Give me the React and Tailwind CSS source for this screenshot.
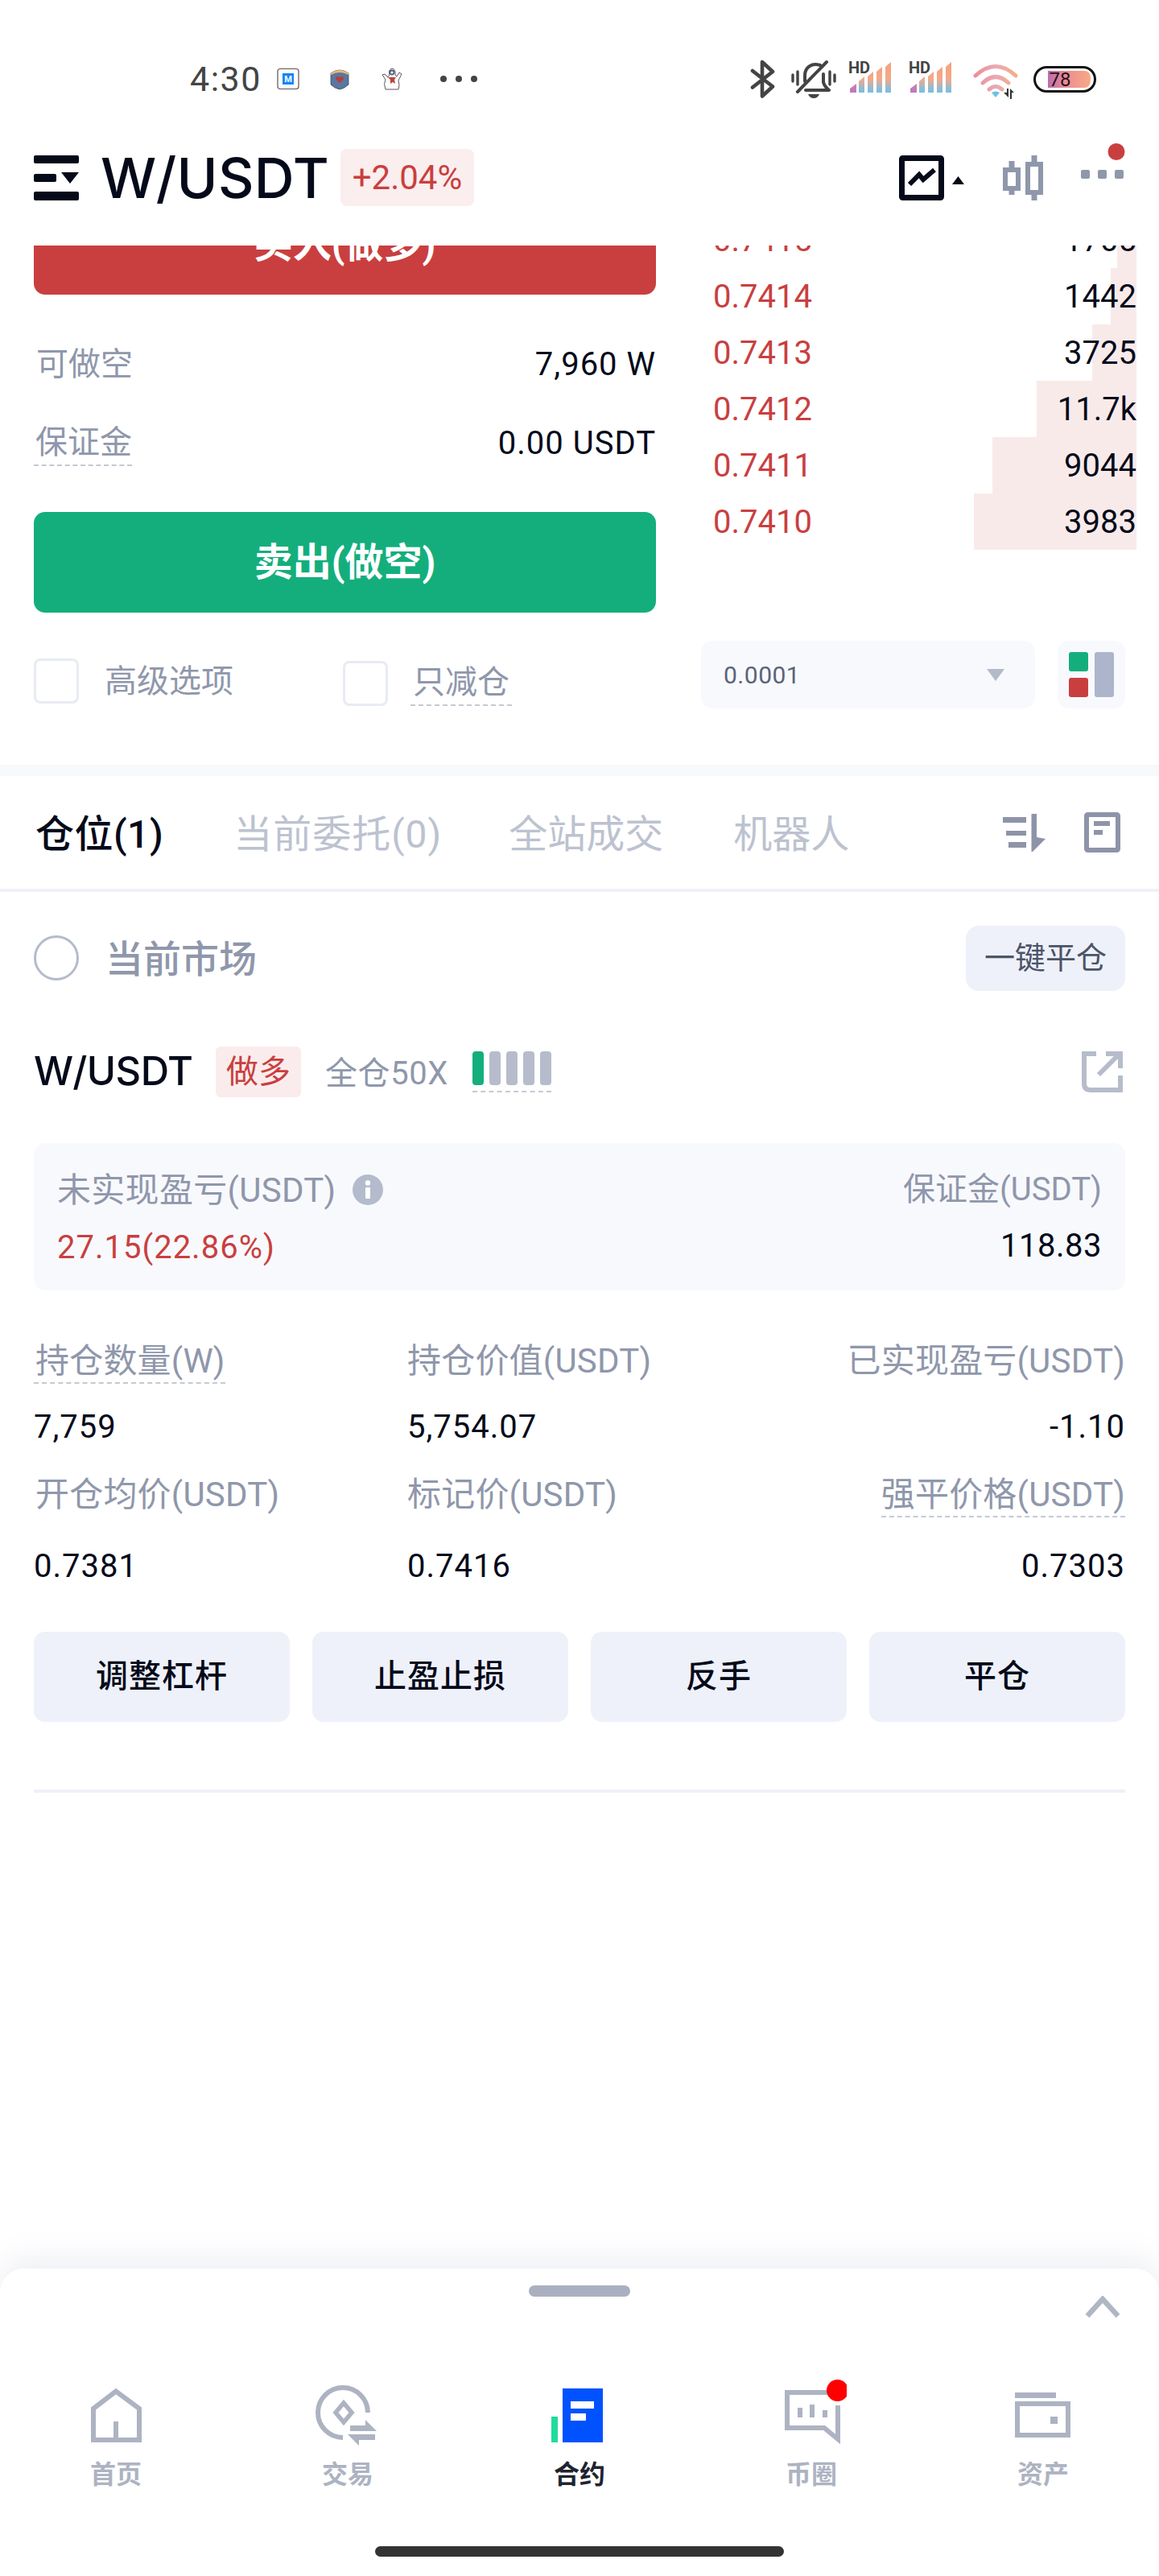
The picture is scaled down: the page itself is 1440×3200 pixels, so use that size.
import React from "react";

const Svg = ({ w, h, className = "", children }) => (
  <svg width={w} height={h} viewBox={`0 0 ${w} ${h}`} className={`shrink-0 block ${className}`} fill="none">
    {children}
  </svg>
);

const MTile = () => (
  <Svg w={28} h={28}>
    <rect x="1" y="1.5" width="26" height="25" rx="3" fill="#fff" stroke="#5d5050" strokeWidth="1.2" />
    <rect x="7" y="7" width="14" height="14" fill="#0f86f5" />
    <text x="14" y="18" fontSize="11" fontWeight="700" fill="#fff" textAnchor="middle" fontFamily="Roboto">M</text>
  </Svg>
);

const ShieldIcon = () => (
  <Svg w={24} h={28}>
    <path d="M1 7 Q12 -1 23 7 V21 Q18 26 12 27 Q6 26 1 21 Z" fill="#5a779f" stroke="#3d4a60" strokeWidth="0.8" />
    <path d="M1 7 Q12 -1 23 7 V9 Q12 3 1 9 Z" fill="#e9b878" />
    <path d="M12 19 L7 14.5 Q6.5 11 9.5 11 Q11.3 11 12 12.6 Q12.7 11 14.5 11 Q17.5 11 17 14.5 Z" fill="#b43f3f" />
  </Svg>
);

const PenguinIcon = () => (
  <Svg w={26} h={28}>
    <path d="M5 27 Q2 20 5 15 L1 9 L4 8 L8 12 Q9 10 10 9 Q8 3 13 1 Q18 2 17 9 L19 11 L22 6 L25 8 L21 16 Q23 22 21 27 Z" fill="#fff" stroke="#5a5560" strokeWidth="1" />
    <circle cx="13" cy="6" r="3.4" fill="#50607c" />
    <circle cx="13" cy="6" r="1.6" fill="#fff" />
    <path d="M8 12 L18 12 L16 15 L17 20 L14 18 L11 20 L11 15 Z" fill="#b8453d" />
  </Svg>
);

const Bluetooth = () => (
  <Svg w={31} h={48}>
    <path d="M3 14 L28 33.5 L15 45.5 V3 L28 15 L3 34.5" stroke="#444" strokeWidth="4.6" strokeLinecap="round" strokeLinejoin="round" />
  </Svg>
);

const BellOff = () => (
  <Svg w={56} h={48}>
    <g stroke="#444" strokeWidth="3.4" strokeLinecap="round">
      <path d="M2 19 V27 M8 15 V31 M48 15 V31 M54 19 V27" />
    </g>
    <g stroke="#444" strokeWidth="4" strokeLinecap="round" strokeLinejoin="round">
      <path d="M8 40 L44 3" />
      <path d="M17 27 V20 C17 9 26 4 36 7" />
      <path d="M40 18 V28 Q41 33 47 38 H18" />
    </g>
    <path d="M21 43 H35 Q33 48 28 48 Q23 48 21 43 Z" fill="#444" />
  </Svg>
);

const Signal = ({ id }) => (
  <Svg w={55} h={44} className="-mt-[10px]">
    <defs>
      <linearGradient id={id} x1="0" y1="6" x2="0" y2="44" gradientUnits="userSpaceOnUse">
        <stop offset="0" stopColor="#f7a07c" />
        <stop offset="0.55" stopColor="#f4a98a" />
        <stop offset="1" stopColor="#6cc1ec" />
      </linearGradient>
      <linearGradient id={`${id}p`} x1="0" y1="34" x2="0" y2="44" gradientUnits="userSpaceOnUse">
        <stop offset="0" stopColor="#d27ea9" />
        <stop offset="1" stopColor="#b779c4" />
      </linearGradient>
    </defs>
    <text x="0" y="20" fontSize="20" fontWeight="700" fill="#444" fontFamily="Roboto">HD</text>
    <path d="M2 44 V39 L10 33 V44 Z" fill={`url(#${id}p)`} />
    <path d="M13 44 V30 L20 24 V44 Z" fill={`url(#${id})`} />
    <path d="M24 44 V24 L31 18 V44 Z" fill={`url(#${id})`} />
    <path d="M35 44 V18 L42 12 V44 Z" fill={`url(#${id})`} />
    <path d="M46 44 V12 L53 6 V44 Z" fill={`url(#${id})`} />
  </Svg>
);

const Wifi = () => (
  <Svg w={57} h={44}>
    <defs>
      <linearGradient id="wf" x1="0" y1="0" x2="57" y2="0" gradientUnits="userSpaceOnUse">
        <stop offset="0" stopColor="#f08a94" />
        <stop offset="0.5" stopColor="#e9a9b4" />
        <stop offset="1" stopColor="#f7ad82" />
      </linearGradient>
    </defs>
    <g stroke="url(#wf)" strokeWidth="5" strokeLinecap="round">
      <path d="M3 15 Q28 -8 53 15" />
      <path d="M12 24 Q28 9 44 24" />
      <path d="M20 32 Q28 25 36 32" />
    </g>
    <path d="M23 36 Q28 33 33 36 L28 42 Z" fill="#69c2e8" />
    <path d="M38 36 H42 V31 H44 V42 Z M46 44 V31 L51 36 H48 V44 Z" fill="#333" />
  </Svg>
);

const Battery = () => (
  <Svg w={78} h={33}>
    <defs>
      <linearGradient id="bt" x1="0" y1="0" x2="78" y2="0" gradientUnits="userSpaceOnUse">
        <stop offset="0.2" stopColor="#b76bb0" />
        <stop offset="0.55" stopColor="#ee8f90" />
        <stop offset="1" stopColor="#f9b182" />
      </linearGradient>
    </defs>
    <rect x="1.5" y="1.5" width="75" height="30" rx="15" fill="#fff" stroke="#111" strokeWidth="3" />
    <path d="M18 6 H64 Q71 6 71 16 Q71 27 64 27 H18 Z" fill="url(#bt)" />
    <text x="33" y="25" fontSize="24" fill="#2a1020" textAnchor="middle" fontFamily="Roboto">78</text>
  </Svg>
);

const StatusBar = () => (
  <div className="h-[168px] pt-[68px] pl-[236px] pr-[78px] shrink-0">
    <div className="flex items-center h-[60px]">
      <span className="text-[43px] leading-[60px] tracking-[1.5px] text-[#444]">4:30</span>
      <div className="ml-[19px]"><MTile /></div>
      <div className="ml-[38px]"><ShieldIcon /></div>
      <div className="ml-[40px]"><PenguinIcon /></div>
      <div className="ml-[47px] flex gap-[11px]">
        <i className="block w-[8px] h-[8px] rounded-full bg-[#444]" />
        <i className="block w-[8px] h-[8px] rounded-full bg-[#444]" />
        <i className="block w-[8px] h-[8px] rounded-full bg-[#444]" />
      </div>
      <div className="ml-auto flex items-center">
        <Bluetooth />
        <div className="ml-[20px]"><BellOff /></div>
        <div className="ml-[15px]"><Signal id="s1" /></div>
        <div className="ml-[20px]"><Signal id="s2" /></div>
        <div className="ml-[25px] mt-[6px]"><Wifi /></div>
        <div className="ml-[18px]"><Battery /></div>
      </div>
    </div>
  </div>
);

const MenuIcon = () => (
  <Svg w={56} h={56}>
    <rect x="0" y="0" width="56" height="10" rx="2" fill="#050a1a" />
    <rect x="0" y="23" width="28" height="10" rx="2" fill="#050a1a" />
    <path d="M34 21 H56 L45 35 Z" fill="#050a1a" />
    <rect x="0" y="45" width="56" height="11" rx="2" fill="#050a1a" />
  </Svg>
);

const ChartIcon = () => (
  <Svg w={81} h={56}>
    <rect x="3.5" y="3.5" width="49" height="49" rx="1" stroke="#050a1a" strokeWidth="7" />
    <path d="M13 36 L25 24 L30 30 L44 18" stroke="#050a1a" strokeWidth="6" />
    <path d="M66 36 L73.5 26 L81 36 Z" fill="#050a1a" />
  </Svg>
);

const CandleIcon = () => (
  <Svg w={50} h={56}>
    <path d="M11 7 V15 M11 41 V49 M39 0 V8 M39 49 V56" stroke="#8f97ab" strokeWidth="7" />
    <rect x="3" y="18" width="16" height="23" stroke="#8f97ab" strokeWidth="6" />
    <rect x="31" y="11" width="16" height="35" stroke="#8f97ab" strokeWidth="6" />
  </Svg>
);

const MoreIcon = () => (
  <Svg w={56} h={44}>
    <rect x="1" y="33" width="11" height="11" rx="2" fill="#8f97ab" />
    <rect x="22" y="33" width="11" height="11" rx="2" fill="#8f97ab" />
    <rect x="43" y="33" width="11" height="11" rx="2" fill="#8f97ab" />
    <circle cx="45" cy="10.5" r="10.5" fill="#c93f3f" />
  </Svg>
);

const Header = () => (
  <div className="h-[137px] shrink-0 pl-[42px] pr-[42px] flex items-start">
    <div className="mt-[25px]"><MenuIcon /></div>
    <span className="ml-[27px] mt-[13px] w-[284px] text-[69px] leading-[80px] tracking-[0.3px] font-medium text-[#050a1a] [font-family:Inter,sans-serif] whitespace-nowrap">W/USDT</span>
    <span className="ml-[14px] mt-[17px] h-[71px] w-[166px] rounded-[8px] bg-[#fbeeee] text-[#c93f3f] text-[42px] leading-[71px] text-center">+2.04%</span>
    <div className="ml-auto mt-[25px] flex items-start">
      <ChartIcon />
      <div className="ml-[48px]"><CandleIcon /></div>
      <div className="ml-[46px] -mt-[15px]"><MoreIcon /></div>
    </div>
  </div>
);

const Dashed = ({ children, className = "" }) => (
  <span className={`inline-block border-b-2 border-dashed border-[#c4c9d4] ${className}`}>{children}</span>
);

const book = [
  ["0.7415", "1705", 24],
  ["0.7414", "1442", 32],
  ["0.7413", "3725", 55],
  ["0.7412", "11.7k", 124.5],
  ["0.7411", "9044", 179],
  ["0.7410", "3983", 202],
];

const OrderBook = () => (
  <div className="-mt-[42.5px] ml-[15px] w-[526px]">
    {book.map(([p, q, w]) => (
      <div key={p} className="relative h-[70px] flex items-center justify-between text-[40px]">
        <div className="absolute right-0 top-0 bottom-0 bg-[#f9eaea]" style={{ width: w }} />
        <span className="relative pt-[3px] text-[#c93f3f]">{p}</span>
        <span className="relative pt-[3px] text-[#050a1a]">{q}</span>
      </div>
    ))}
  </div>
);

const Check = ({ className = "" }) => (
  <div className={`w-[56px] h-[56px] rounded-[8px] border-[3px] border-[#e8ebf3] bg-white ${className}`} />
);

const TradePanel = () => (
  <div className="h-[645px] shrink-0 overflow-hidden flex pl-[42px]">
    <div className="w-[773px] shrink-0">
      <div className="-mt-[64px] h-[125px] rounded-[14px] bg-[#c93f3f] text-white text-[48px] font-bold flex items-center justify-center">买入(做多)</div>
      <div className="h-[98px] mt-[37.5px] flex items-center justify-between">
        <span className="text-[40px] text-[#8f97ab] ml-[3px]">可做空</span>
        <span className="text-[40px] text-[#050a1a] tracking-[1px]">7,960 W</span>
      </div>
      <div className="h-[99px] flex items-center justify-between">
        <Dashed className="text-[40px] leading-[54px] text-[#8f97ab] pl-[2px]">保证金</Dashed>
        <span className="text-[40px] text-[#050a1a] tracking-[1px]">0.00 USDT</span>
      </div>
      <div className="mt-[35.5px] h-[125px] rounded-[14px] bg-[#14ae7c] text-white text-[48px] font-bold flex items-center justify-center">卖出(做空)</div>
      <div className="mt-[57px] flex">
        <Check />
        <span className="ml-[32px] text-[40px] leading-[58px] text-[#8f97ab]">高级选项</span>
        <Check className="ml-[136px] mt-[3px]" />
        <Dashed className="ml-[28px] mt-[3px] h-[56px] text-[40px] leading-[54px] text-[#8f97ab] px-[3px]">只减仓</Dashed>
      </div>
    </div>
    <div className="ml-[56px] flex-1 min-w-0">
      <OrderBook />
      <div className="mt-[113.5px] flex pr-[42px]">
        <div className="w-[415px] h-[84px] rounded-[14px] bg-[#f8f9fd] pl-[28px] pr-[38px] flex items-center justify-between">
          <span className="text-[30px] text-[#5a6378] tracking-[0.5px]">0.0001</span>
          <svg width="22" height="15" viewBox="0 0 22 15" className="block"><path d="M0 0 H22 L11 15 Z" fill="#b4bac9" /></svg>
        </div>
        <div className="ml-auto w-[84px] h-[84px] rounded-[14px] bg-[#f8f9fd] flex items-center justify-center">
          <svg width="56" height="56" viewBox="0 0 56 56" className="block">
            <rect x="0" y="0" width="24" height="24" rx="3" fill="#14ae7c" />
            <rect x="0" y="32" width="24" height="24" rx="3" fill="#c93f3f" />
            <rect x="32" y="0" width="24" height="56" rx="3" fill="#adb5cc" />
          </svg>
        </div>
      </div>
    </div>
  </div>
);

const SortIcon = () => (
  <Svg w={53} h={47}>
    <path d="M0 4 H29 V11 H0 Z M4 21 H29 V27 H4 Z M7 35 H29 V42 H7 Z" fill="#8e94a8" />
    <path d="M35.5 0 H42 V29 L53 31 L37 47 H35.5 Z" fill="#8e94a8" />
  </Svg>
);

const LogIcon = () => (
  <Svg w={45} h={50}>
    <rect x="3" y="3" width="39" height="44" rx="1.5" stroke="#8e94a8" strokeWidth="6" />
    <path d="M12 11 H32 V17 H12 Z M12 22 H23 V28 H12 Z" fill="#8e94a8" />
  </Svg>
);

const Tabs = () => (
  <div className="h-[144px] shrink-0 border-b-[4px] border-[#eef1f9] flex items-center pl-[44px] pr-[48px] text-[#bcc2d0]">
    <div className="flex mt-[5px] text-[48px]">
      <span className="text-[#050a1a] font-medium tracking-[0.5px]">仓位(1)</span>
      <span className="ml-[87px] tracking-[1px]">当前委托(0)</span>
      <span className="ml-[83px]">全站成交</span>
      <span className="ml-[87px]">机器人</span>
    </div>
    <div className="ml-auto flex items-center">
      <SortIcon />
      <div className="ml-[48px]"><LogIcon /></div>
    </div>
  </div>
);

const ExternalIcon = () => (
  <Svg w={51} h={51}>
    <path d="M18 3 H3 V40 Q3 48 11 48 H48 V30" stroke="#b6bccb" strokeWidth="6" />
    <path d="M21 29 L46 4 M30 3 H48 V21" stroke="#b6bccb" strokeWidth="6" />
  </Svg>
);

const InfoIcon = () => (
  <Svg w={38} h={38}>
    <circle cx="19" cy="19" r="19" fill="#b4bbcc" />
    <circle cx="19" cy="10.5" r="3.2" fill="#fff" />
    <rect x="16" y="16" width="6" height="14" rx="1" fill="#fff" />
  </Svg>
);

const stats = [
  { label: ["持仓数量(W)", "持仓价值(USDT)", "已实现盈亏(USDT)"], dash: [true, false, false], val: ["7,759", "5,754.07", "-1.10"], vh: "h-[113.5px] pb-[9px]" },
  { label: ["开仓均价(USDT)", "标记价(USDT)", "强平价格(USDT)"], dash: [false, false, true], val: ["0.7381", "0.7416", "0.7303"], vh: "h-[115px] pt-[3px]" },
];

const Stat = ({ label, dash, value, align, vh, pad = "" }) => (
  <div className={`flex flex-col ${align === "r" ? "items-end text-right" : "items-start"}`}>
    <div className="h-[52px]">
      {dash ? (
        <Dashed className={`text-[42px] leading-[44px] pb-[4px] tracking-[0.2px] text-[#8f97ab] ${pad}`}>{label}</Dashed>
      ) : (
        <span className={`block text-[42px] leading-[44px] tracking-[0.2px] text-[#8f97ab] ${pad}`}>{label}</span>
      )}
    </div>
    <div className={`${vh} flex items-center text-[40px] tracking-[1px] text-[#050a1a]`}>{value}</div>
  </div>
);

const Actions = ["调整杠杆", "止盈止损", "反手", "平仓"];

const Position = () => (
  <div className="px-[42px] shrink-0">
    <div className="pt-[42px] flex items-start">
      <div className="mt-[12px] w-[56px] h-[56px] rounded-full border-[3px] border-[#b4bbcc]" />
      <span className="ml-[33px] mt-[14px] text-[47px] leading-[56px] font-medium text-[#8f97ab]">当前市场</span>
      <div className="ml-auto w-[198px] h-[81px] rounded-[16px] bg-[#eef1f9] flex items-center justify-center text-[38px] text-[#4c5468]">一键平仓</div>
    </div>

    <div className="mt-[67px] h-[66px] flex items-center">
      <span className="w-[196px] text-[49px] font-medium text-[#050a1a] [font-family:Inter,sans-serif] tracking-[-0.5px] whitespace-nowrap">W/USDT</span>
      <span className="ml-[30px] w-[106px] h-[63px] rounded-[6px] bg-[#faecec] text-[#c93f3f] text-[40px] leading-[63px] text-center">做多</span>
      <span className="ml-[30px] mt-[6px] text-[40px] tracking-[0.6px] text-[#8f97ab]">全仓50X</span>
      <div className="ml-[30px] mt-[1px] border-b-2 border-dashed border-[#c4c9d4] pb-[7px] flex gap-[7px]">
        <i className="block w-[14px] h-[42px] rounded-[4px] bg-[#14ae7c]" />
        <i className="block w-[14px] h-[42px] rounded-[4px] bg-[#b6bccb]" />
        <i className="block w-[14px] h-[42px] rounded-[4px] bg-[#b6bccb]" />
        <i className="block w-[14px] h-[42px] rounded-[4px] bg-[#b6bccb]" />
        <i className="block w-[14px] h-[42px] rounded-[4px] bg-[#b6bccb]" />
      </div>
      <div className="ml-auto mr-[3px]"><ExternalIcon /></div>
    </div>

    <div className="mt-[56px] h-[183px] rounded-[14px] bg-[#f8f9fd] px-[29px] pt-[36px] flex justify-between">
      <div>
        <div className="h-[44px] flex items-center">
          <span className="text-[42px] tracking-[0.3px] text-[#8f97ab]">未实现盈亏(USDT)</span>
          <div className="ml-[20px]"><InfoIcon /></div>
        </div>
        <div className="mt-[28px] h-[44px] flex items-center text-[40px] tracking-[1px] text-[#c93f3f]">27.15(22.86%)</div>
      </div>
      <div className="text-right">
        <div className="h-[44px] flex items-center justify-end text-[40px] text-[#8f97ab]">保证金(USDT)</div>
        <div className="mt-[26px] h-[44px] flex items-center justify-end text-[40px] tracking-[0.5px] text-[#050a1a]">118.83</div>
      </div>
    </div>

    <div className="mt-[66px]">
      {stats.map((r, i) => (
        <div key={i} className="grid grid-cols-[464px_1fr_1fr]">
          <Stat label={r.label[0]} dash={r.dash[0]} value={r.val[0]} vh={r.vh} pad="pl-[2px]" />
          <Stat label={r.label[1]} dash={r.dash[1]} value={r.val[1]} vh={r.vh} />
          <Stat label={r.label[2]} dash={r.dash[2]} value={r.val[2]} vh={r.vh} align="r" />
        </div>
      ))}
    </div>

    <div className="mt-[25.5px] grid grid-cols-4 gap-[28px]">
      {Actions.map((a) => (
        <div key={a} className="h-[112px] rounded-[14px] bg-[#eef1f9] flex items-center justify-center text-[40px] tracking-[1px] font-medium text-[#050a1a]">{a}</div>
      ))}
    </div>

    <div className="mt-[84px] h-[4px] bg-[#eef1f9]" />
  </div>
);

const HomeIcon = () => (
  <Svg w={88} h={88}>
    <path d="M16 75 V36 L44 14.5 L73 36 V75 Z" stroke="#adb3c2" strokeWidth="6" />
    <path d="M44 52 V75" stroke="#adb3c2" strokeWidth="6" />
  </Svg>
);

const TradeIcon = () => (
  <Svg w={88} h={88}>
    <path d="M69 41 A31 31 0 1 0 38 72" stroke="#adb3c2" strokeWidth="6" />
    <path d="M39 29 L49 41 L39 53 L29 41 Z" stroke="#adb3c2" strokeWidth="5.5" />
    <path d="M47 57 H66 V50 L80 64 H47 Z" fill="#adb3c2" />
    <path d="M44 68 H78 V75 H58 V82 Z" fill="#adb3c2" />
  </Svg>
);

const ContractIcon = () => (
  <Svg w={88} h={88}>
    <rect x="9" y="46" width="8" height="32" fill="#1fdc9c" />
    <rect x="23" y="11" width="50" height="67" fill="#0052ff" />
    <rect x="33" y="27" width="29" height="9" fill="#fff" />
    <rect x="33" y="42" width="19" height="9" fill="#fff" />
  </Svg>
);

const CircleIcon = () => (
  <Svg w={88} h={88}>
    <path d="M64 16 H14 V60 H60 L77 74 V32" stroke="#adb3c2" strokeWidth="6" />
    <path d="M27 35 H33 V47 H27 Z M42 31 H48 V47 H42 Z M58 38 H64 V47 H58 Z" fill="#adb3c2" />
    <circle cx="76.5" cy="13.5" r="13.5" fill="#ff0000" />
  </Svg>
);

const WalletIcon = () => (
  <Svg w={88} h={88}>
    <rect x="9" y="16" width="51" height="7" fill="#adb3c2" />
    <rect x="12" y="30" width="63" height="39" stroke="#adb3c2" strokeWidth="6" />
    <rect x="53" y="46" width="9" height="9" fill="#adb3c2" />
  </Svg>
);

const nav = [
  ["首页", HomeIcon, false],
  ["交易", TradeIcon, false],
  ["合约", ContractIcon, true],
  ["币圈", CircleIcon, false],
  ["资产", WalletIcon, false],
];

const BottomNav = () => (
  <div className="relative mt-auto h-[382px] shrink-0 rounded-t-[30px] bg-white shadow-[0_-14px_36px_rgba(120,135,175,0.12)]">
    <div className="pt-[21px] flex justify-center">
      <div className="w-[126px] h-[14px] rounded-full bg-[#aab0c0]" />
    </div>
    <svg width="44" height="27" viewBox="0 0 44 27" className="block absolute right-[48px] top-[34px]">
      <path d="M3 25 L22 4 L41 25" stroke="#b0b6c4" strokeWidth="6.5" fill="none" />
    </svg>
    <div className="mt-[103px] grid grid-cols-5">
      {nav.map(([t, I, active]) => (
        <div key={t} className="flex flex-col items-center">
          <I />
          <span className={`text-[32px] leading-[60px] font-bold ${active ? "text-[#1f2430]" : "text-[#adb3c2]"}`}>{t}</span>
        </div>
      ))}
    </div>
    <div className="mt-[59px] mx-auto w-[508px] h-[13px] rounded-full bg-[#333]" />
  </div>
);

export default function App() {
  return (
    <div className="w-[1440px] h-[3200px] bg-white overflow-hidden flex flex-col [font-family:Roboto,'Noto_Sans_CJK_SC',sans-serif]">
      <StatusBar />
      <Header />
      <TradePanel />
      <div className="h-[14px] shrink-0 bg-[#f8f9fb]" />
      <Tabs />
      <Position />
      <BottomNav />
    </div>
  );
}
